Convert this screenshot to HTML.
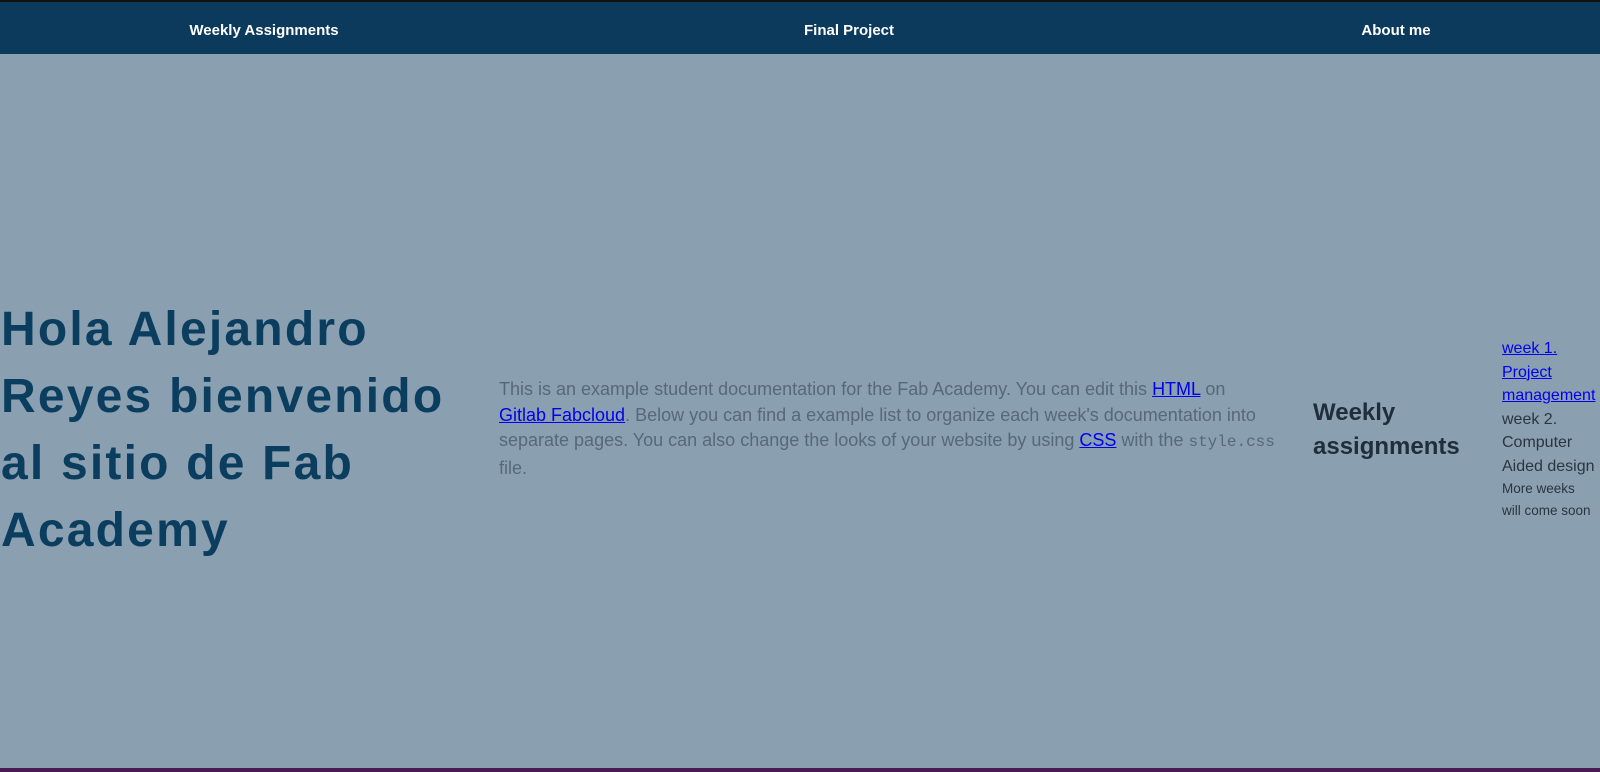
<!DOCTYPE html>
<html><head><meta charset="utf-8"><style>
html,body{margin:0;padding:0;width:1600px;height:772px;overflow:hidden;background:#8aa0b0;font-family:"Liberation Sans",sans-serif;}
.top{position:absolute;left:0;top:0;width:1600px;height:2px;background:#111;}
nav{position:absolute;left:0;top:2px;width:1600px;height:52px;background:#0b3a5c;}
nav span{position:absolute;top:20px;color:#fff;font-weight:bold;font-size:15px;transform:translateX(-50%);white-space:nowrap;}
h1{position:absolute;left:1px;top:296px;margin:0;width:470px;font-size:48px;line-height:67px;color:#0b3d5e;font-weight:bold;letter-spacing:2.2px;}
p{position:absolute;left:499px;top:377px;margin:0;width:800px;font-size:18px;line-height:25.5px;color:#56687a;}
a{color:#0000ee;}
code{font-family:"Liberation Mono",monospace;font-size:16px;}
h2{position:absolute;left:1313px;top:396px;margin:0;font-size:24px;line-height:34px;color:#1f2d3d;font-weight:bold;}
ul{position:absolute;left:1502px;top:337px;margin:0;padding:0;list-style:none;width:130px;color:#2a3442;font-size:16px;line-height:23.5px;}
.sm{font-size:13.5px;line-height:22px;}
.bot{position:absolute;left:0;top:768px;width:1600px;height:4px;background:#4a1a55;}
</style></head><body>
<div class="top"></div>
<nav><span style="left:264px">Weekly Assignments</span><span style="left:849px">Final Project</span><span style="left:1396px">About me</span></nav>
<h1>Hola Alejandro Reyes bienvenido al sitio de Fab Academy</h1>
<p>This is an example student documentation for the Fab Academy. You can edit this <a href="#">HTML</a> on<br><a href="#">Gitlab Fabcloud</a>. Below you can find a example list to organize each week's documentation into separate pages. You can also change the looks of your website by using <a href="#">CSS</a> with the <code>style.css</code> file.</p>
<h2>Weekly<br>assignments</h2>
<ul><li><a href="#">week 1.<br>Project<br>management</a></li><li>week 2.<br>Computer<br>Aided design</li><li class="sm">More weeks<br>will come soon</li></ul>
<div class="bot"></div>
</body></html>
